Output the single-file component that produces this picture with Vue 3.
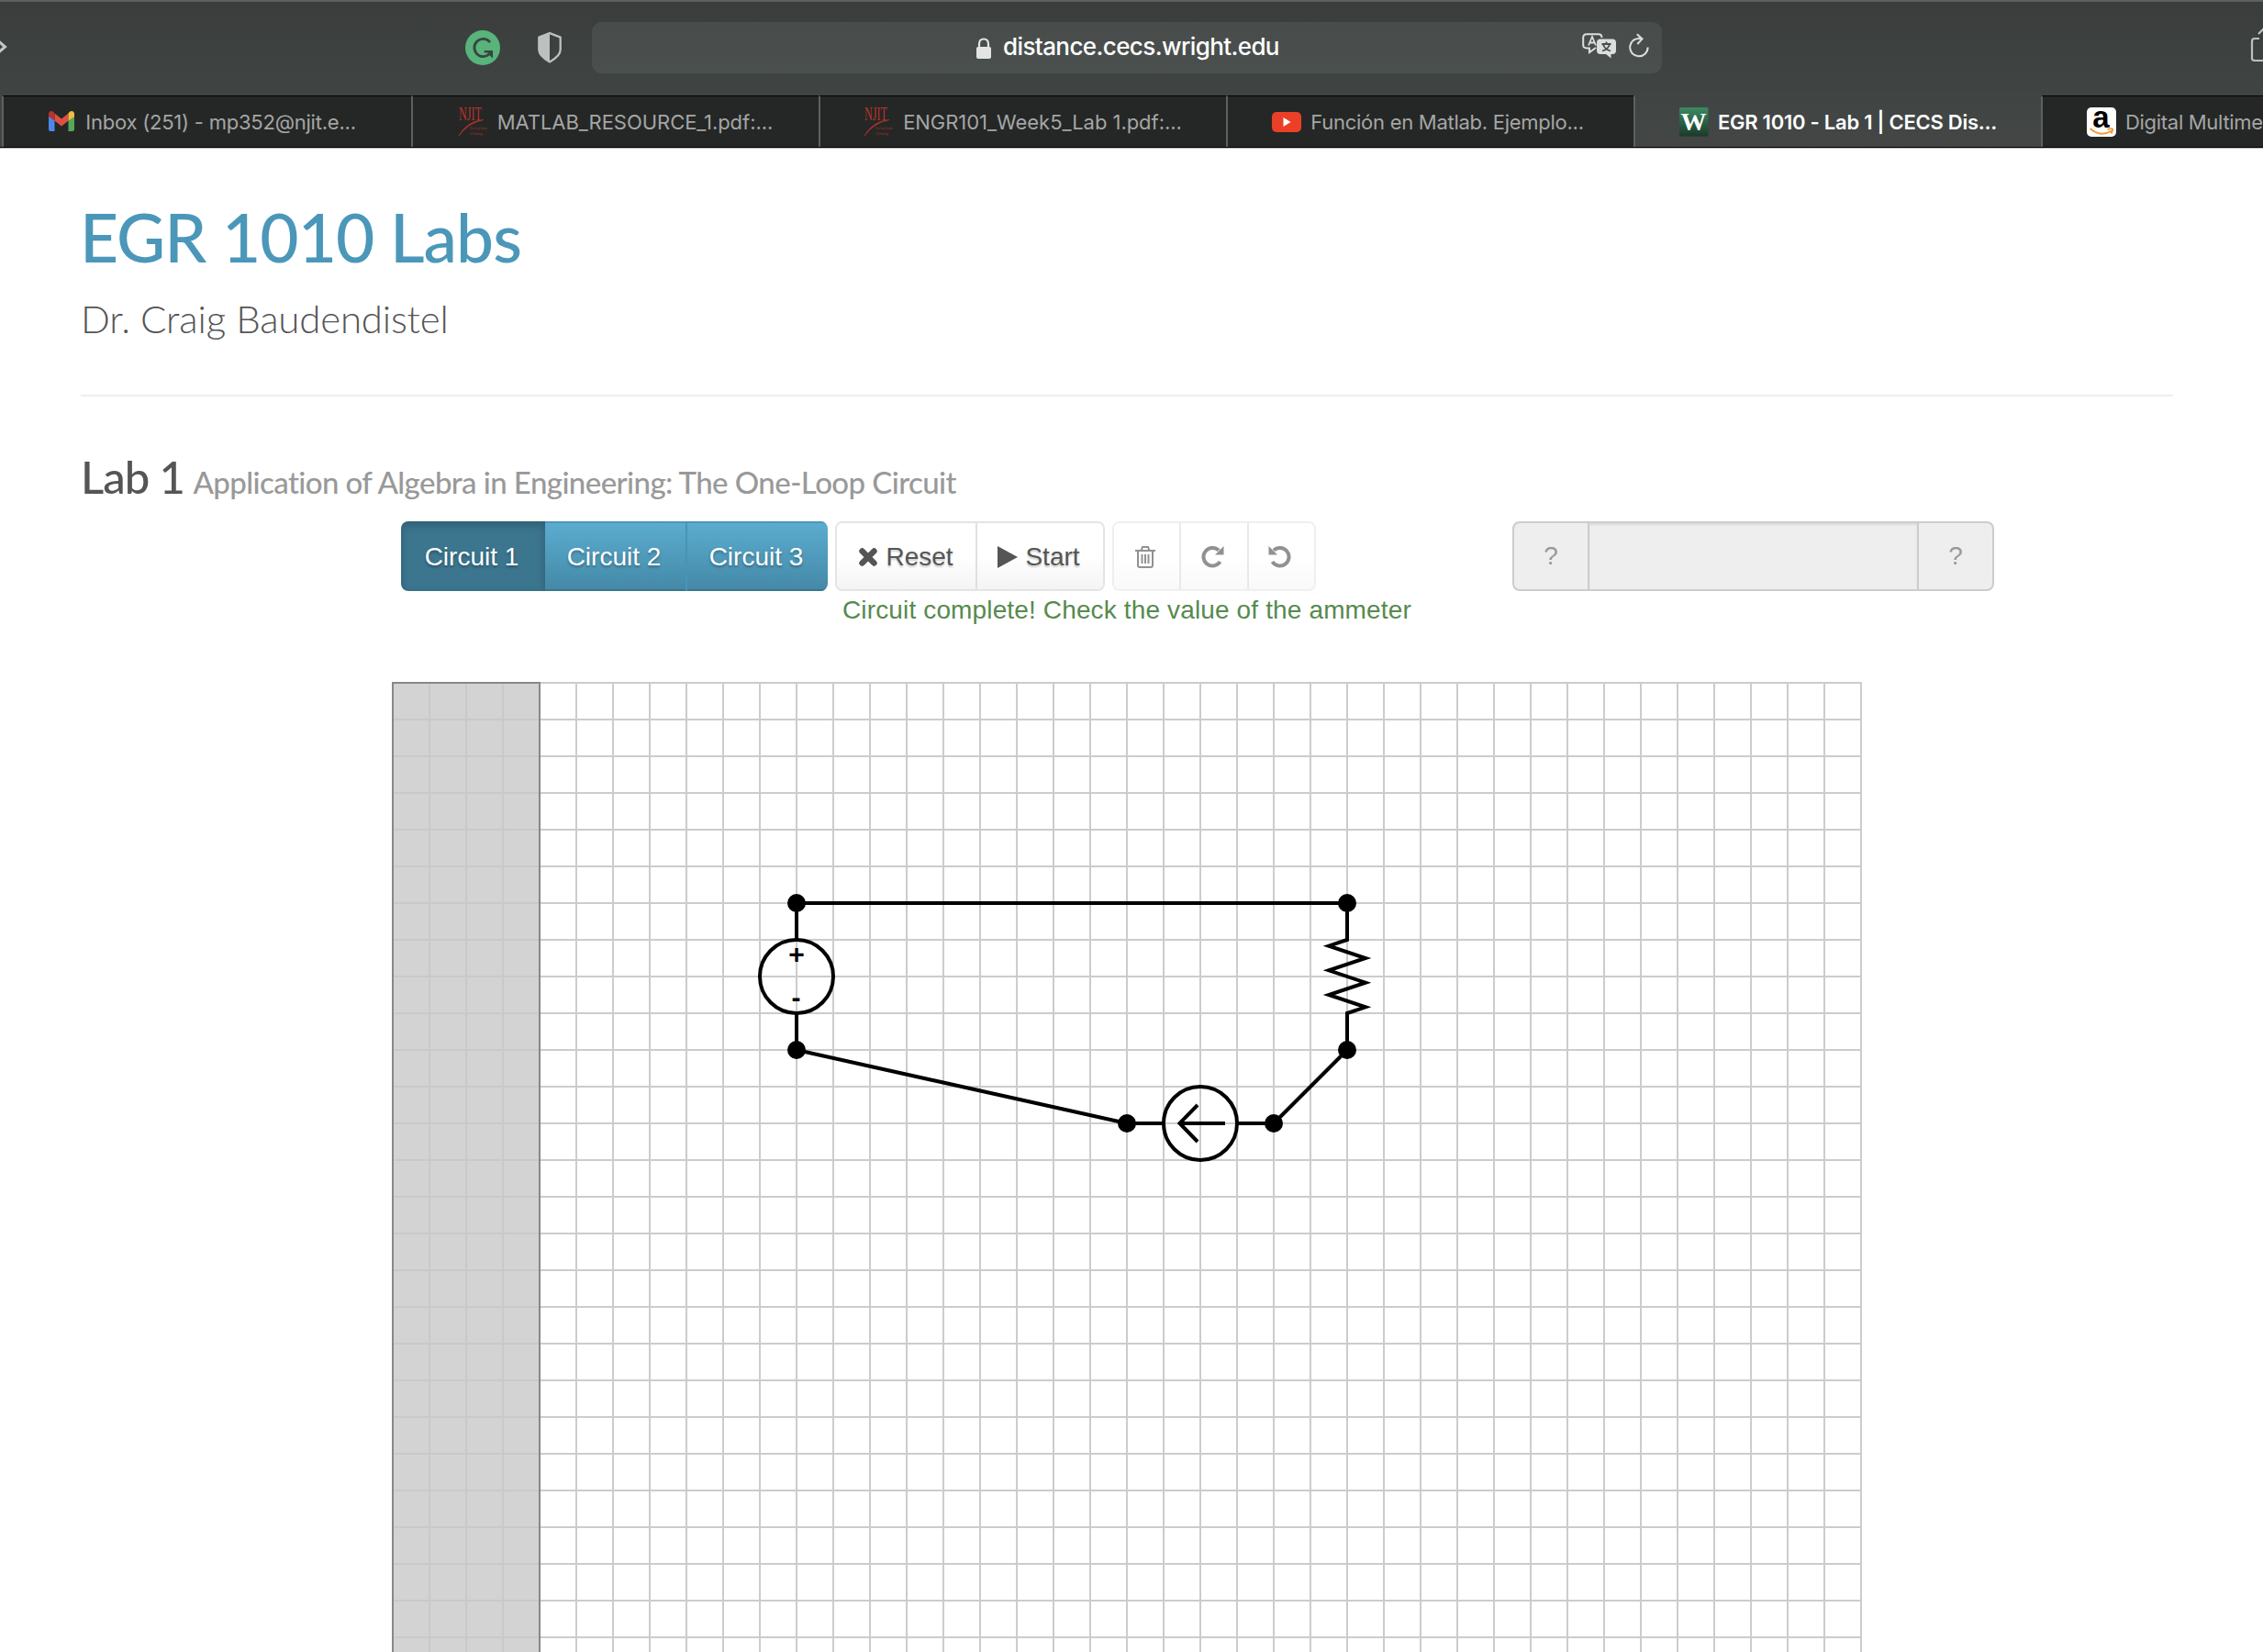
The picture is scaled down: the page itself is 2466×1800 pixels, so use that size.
<script setup>
import { computed } from 'vue'

const tabs = [
  { icon: 'gmail', title: 'Inbox (251) - mp352@njit.e...', ls: -0.22 },
  { icon: 'njit', title: 'MATLAB_RESOURCE_1.pdf:...', ls: -0.04 },
  { icon: 'njit', title: 'ENGR101_Week5_Lab 1.pdf:...', ls: -0.04 },
  { icon: 'youtube', title: 'Función en Matlab. Ejemplo...', ls: -0.27 },
  { icon: 'wright', title: 'EGR 1010 - Lab 1 | CECS Dis...', active: true, ls: -0.25 },
  { icon: 'amazon', title: 'Digital Multime', ls: -0.3 }
]
const CELL = 40
const gridPath = computed(() => {
  let d = ''
  for (let i = 0; i <= 40; i++) d += `M${2 + i * CELL} 1V1060`
  for (let j = 0; j <= 26; j++) d += `M1 ${2 + j * CELL}H1603`
  return d
})
const nodes = [[442, 242], [442, 402], [802, 482], [962, 482], [1042, 242], [1042, 402]]
</script>

<template>
  <div class="window">
    <header class="toolbar">
      <svg class="chevron" width="10" height="28" viewBox="0 0 10 28"><path d="M-6 4L5.500 14L-6 24" /></svg>
      <svg class="grammarly" width="38" height="38" viewBox="0 0 38 38">
        <circle cx="19" cy="19" r="19" fill="#58b47a" />
        <path d="M27 13A9.600 9.600 0 1 0 26 26" fill="none" stroke="#3a4441" stroke-width="2.800" />
        <path d="M20.700 22H30V30.500L27 27.800L24.500 24.500H20.700Z" fill="#3a4441" />
      </svg>
      <svg class="shield" width="28" height="34" viewBox="0 0 28 34">
        <path d="M14 1.2L25.7 5.6V19Q25.7 26 14 32.4Q2.300 26 2.300 19V5.600Z" fill="none" stroke="#bcc0bf" stroke-width="2.300" stroke-linejoin="round" />
        <path d="M14 1.200V32.400Q2.300 26 2.300 19V5.600Z" fill="#bcc0bf" />
      </svg>
      <div class="address">
        <svg class="lock" width="18" height="24" viewBox="0 0 18 24">
          <path d="M4 12V7Q4 1.500 9 1.500T14 7V12" fill="none" stroke="#e3e4e4" stroke-width="2.200" />
          <rect x="1" y="10" width="16" height="13" rx="2" fill="#e3e4e4" />
        </svg>
        <span class="host">distance.cecs.wright.edu</span>
        <svg class="translate" width="38" height="28" viewBox="0 0 38 28">
          <path d="M15 16L8 21V16.500H5Q1.200 16.500 1.200 13V5Q1.200 1.200 5 1.200H18Q21.500 1.200 21.500 5" fill="none" stroke="#dcdedd" stroke-width="2" />
          <path d="M7 13.500L11 4L15 13.500M8.500 10.500H13.500" fill="none" stroke="#dcdedd" stroke-width="1.800" />
          <path d="M20 6.500H33Q37 6.500 37 10.500V19Q37 23 33 23H31.500V27.500L26 23H20Q16 23 16 19V10.500Q16 6.500 20 6.500Z" fill="#dcdedd" />
          <path d="M21.500 12H31.500M26.500 9.500V12M23 12.500Q25 18 31 19.500M30 12.500Q28 18 22 19.500" fill="none" stroke="#484d4b" stroke-width="1.800" />
        </svg>
        <svg class="reload" width="24" height="28" viewBox="0 0 24 28">
          <path d="M14.500 6.300A9.700 9.700 0 1 0 21.600 15.500M9.800 1.200L15.500 6.400L10.300 12" fill="none" stroke="#dcdedd" stroke-width="2" />
        </svg>
      </div>
      <svg class="share" width="14" height="38" viewBox="0 0 14 38">
        <path d="M10 12H5Q2 12 2 15V33.500Q2 36 5 36H20M9 7L16 0" fill="none" stroke="#bcc0bf" stroke-width="2.200" />
      </svg>
    </header>

    <nav class="tabs">
      <div v-for="(tab, i) in tabs" :key="i" class="tab" :class="[tab.icon + '-tab', { active: tab.active }]">
        <svg v-if="tab.icon === 'gmail'" class="favicon" width="30" height="24" viewBox="0 0 30 24">
          <path d="M1 3V20Q1 22 3 22H7.500V10Z" fill="#4e86ec" />
          <path d="M29 3V20Q29 22 27 22H22.500V10Z" fill="#57a65a" />
          <path d="M7.500 2.500L15 8.500L22.500 2.500V10.500L15 16.500L7.500 10.500Z" fill="#dd5144" />
          <path d="M1 6V3.500Q1 0 4 0Q5.500 0 7.500 2.300V10.500Z" fill="#b5352c" />
          <path d="M29 6V3.500Q29 0 26 0Q24.500 0 22.500 2.300V10.500Z" fill="#f1bd42" />
        </svg>
        <svg v-else-if="tab.icon === 'njit'" class="favicon" width="32" height="32" viewBox="0 0 32 32">
          <text x="0" y="13.500" textLength="25" lengthAdjust="spacingAndGlyphs" class="njit-name">NJIT</text>
          <path d="M0 31Q9 15 27 13.500Q10 17 0 31" fill="#b5342a" stroke="#b5342a" stroke-width=".6" />
          <text x="12" y="24" textLength="19" lengthAdjust="spacingAndGlyphs" class="njit-small">New Jersey Institute</text>
          <text x="12" y="30" textLength="14" lengthAdjust="spacingAndGlyphs" class="njit-small">of Technology</text>
        </svg>
        <svg v-else-if="tab.icon === 'youtube'" class="favicon" width="32" height="24" viewBox="0 0 32 24">
          <rect y="1" width="32" height="22" rx="5" fill="#eb4027" /><path d="M12.500 7L20.500 12L12.500 17Z" fill="#fff" />
        </svg>
        <svg v-else-if="tab.icon === 'wright'" class="favicon" width="32" height="32" viewBox="0 0 32 32">
          <defs><linearGradient id="wg" x2="0" y2="1"><stop stop-color="#3c8a62" /><stop offset="1" stop-color="#1a3a29" /></linearGradient></defs>
          <rect width="31.500" height="31.500" rx="1.500" fill="url(#wg)" />
          <text x="15.500" y="24.500" text-anchor="middle" textLength="28" lengthAdjust="spacingAndGlyphs" class="w-mark">W</text>
        </svg>
        <svg v-else class="favicon" width="32" height="32" viewBox="0 0 32 32">
          <rect width="32" height="32" rx="5" fill="#fff" />
          <text x="15.500" y="22" text-anchor="middle" class="a-mark">a</text>
          <path d="M3.500 23Q15 33 27 25.500M22.500 24Q27 22.500 28 23.500Q28.500 25 26.500 28.500" fill="none" stroke="#f19e38" stroke-width="2" />
        </svg>
        <span :style="{ letterSpacing: tab.ls + 'px' }">{{ tab.title }}</span>
      </div>
    </nav>

    <main>
      <div class="page-header">
        <h1>EGR 1010 Labs</h1>
        <p class="lead">Dr. Craig Baudendistel</p>
      </div>
      <h3>Lab 1 <small>Application of Algebra in Engineering: The One-Loop Circuit</small></h3>

      <div class="controls">
        <div class="group primary">
          <button class="pressed">Circuit 1</button><button>Circuit 2</button><button>Circuit 3</button>
        </div>
        <div class="group actions">
          <button class="reset">
            <svg width="20" height="20" viewBox="0 0 20 20"><path d="M3.500 3.500L16.500 16.500M16.500 3.500L3.500 16.500" stroke="#555" stroke-width="6.400" stroke-linecap="round" /></svg>
            <span>Reset</span>
          </button>
          <button class="start">
            <svg width="22" height="24" viewBox="0 0 22 24"><path d="M0 0L22 12L0 24Z" fill="#555" /></svg>
            <span>Start</span>
          </button>
        </div>
        <div class="group tools">
          <button>
            <svg width="22" height="24" viewBox="0 0 22 24" fill="none" stroke="#919191" stroke-width="2"><path d="M0 5H22M6.500 5L8 1H14L15.500 5M3 5V21Q3 23 5 23H17Q19 23 19 21V5M7.500 9V19M11 9V19M14.500 9V19" /></svg>
          </button>
          <button>
            <svg width="25" height="25" viewBox="0 0 25 25"><path d="M20.500 18A9.800 9.800 0 1 1 19 5.600" fill="none" stroke="#919191" stroke-width="4" /><path d="M24.500 1V10.500H15Z" fill="#919191" /></svg>
          </button>
          <button>
            <svg class="mirror" width="25" height="25" viewBox="0 0 25 25"><path d="M20.500 18A9.800 9.800 0 1 1 19 5.600" fill="none" stroke="#919191" stroke-width="4" /><path d="M24.500 1V10.500H15Z" fill="#919191" /></svg>
          </button>
        </div>
        <div class="reading"><span>?</span><div class="value"></div><span>?</span></div>
      </div>
      <p class="status">Circuit complete! Check the value of the ammeter</p>

      <svg class="board" width="1604" height="1058" viewBox="0 0 1604 1058">
        <path :d="gridPath" stroke="#ccc" stroke-width="2" />
        <rect x="2" y="2" width="160" height="1100" fill="rgba(200,200,200,.8)" stroke="#888" stroke-width="2" />
        <g fill="none" stroke="#000" stroke-width="4">
          <path d="M442 242H1042M442 402L802 482M962 482L1042 402" />
          <path d="M442 242V282M442 362V402M802 482H842M922 482H962" />
          <circle cx="442" cy="322" r="40" /><circle cx="882" cy="482" r="40" />
          <path d="M1042 242V282L1022 288.700L1062 302L1022 315.300L1062 328.700L1022 342L1062 355.300L1042 362V402" />
          <path d="M879 462L859.500 481.900L879 502M861 482H909" />
        </g>
        <circle v-for="(n, i) in nodes" :key="i" :cx="n[0]" :cy="n[1]" r="10" />
        <text x="442" y="307.500" class="sign">+</text>
        <text x="441.500" y="354.500" class="sign">-</text>
      </svg>
    </main>
  </div>
</template>

<style>
body { margin: 0; background: #fff; }
</style>

<style scoped>
.window { width: 2466px; height: 1800px; overflow: hidden; background: #fff; font-family: "Liberation Sans", Arial, sans-serif; }
.window * { box-sizing: border-box; }
svg { display: block; flex: none; }
.toolbar { height: 104px; display: flex; align-items: flex-start; background: linear-gradient(#3a3d3b, #404543); border-top: 2px solid #5b6060; }
.chevron { margin-top: 35px; fill: none; stroke: #c4c7c6; stroke-width: 3; }
.grammarly { margin: 31px 0 0 497px; }
.shield { margin: 33px 0 0 40px; }
.address { display: flex; width: 1166px; height: 56px; margin: 22px 0 0 32px; border-radius: 11px; background: linear-gradient(#484c4a, #4a504e); }
.lock { margin: 17px 0 0 418px; }
.host { margin-left: 12px; width: 302px; white-space: nowrap; font: 500 26px/54px Inter, sans-serif; color: #fff; letter-spacing: -.6px; }
.translate { margin: 12px 0 0 329px; }
.reload { margin: 12px 0 0 12px; }
.share { margin: 28px 0 0 641px; }
.tabs { display: flex; height: 57px; padding-left: 2px; background: #404543; border-bottom: 1px solid #000; box-shadow: 0 1px #bbb; }
.tab { flex: 0 0 444px; height: 56px; display: flex; align-items: center; justify-content: center; gap: 10px; border-left: 2px solid #5c6160; border-top: 1px solid #000; background: #252726; font: 400 22px/54px Inter, sans-serif; color: #a4a6a5; white-space: nowrap; }
.tab:first-child { flex-basis: 446px; padding-right: 12px; gap: 11px; }
.youtube-tab { padding-right: 6px; }
.tab.active { background: linear-gradient(#404544, #434645); border-top-color: transparent; color: #fff; font-weight: 600; }
.tab:last-child { justify-content: flex-start; padding-left: 48px; }
.favicon { overflow: visible; }
.njit-name { font: 20px "Liberation Serif", serif; fill: #b5342a; }
.njit-small { font: 5px "Liberation Serif", serif; fill: #b5342a; }
.w-mark { font: bold 27px "Liberation Serif", serif; fill: #fff; }
.a-mark { font: bold 33px "Liberation Sans", sans-serif; fill: #000; }
main { width: 2280px; margin-left: 88px; }
.page-header { height: 271px; padding-top: 49px; border-bottom: 2px solid #eee; }
h1 { margin: 0 0 0 -1px; font: 500 73px/96px Lato, sans-serif; color: #4b97b9; letter-spacing: -.95px; }
.lead { margin: 11px 0 0; font: 300 42px/60px Lato, sans-serif; color: #555; letter-spacing: -.18px; }
h3 { margin: 47px 0 0; font: 500 49px/80px Lato, sans-serif; color: #555; white-space: nowrap; letter-spacing: -1px; }
small { margin-left: -2px; font-size: 33px; color: #999; letter-spacing: -.58px; }
.controls { display: flex; margin: 3px 0 0 349px; height: 76px; }
.group { display: flex; border-radius: 8px; overflow: hidden; border: 2px solid #e4e4e4; }
button { display: flex; align-items: center; justify-content: center; margin: 0; padding: 1px 3px 0 0; border: 0; border-left: 2px solid #e0e0e0; background: linear-gradient(#fff 50%, #f4f4f4); font: 28px/40px "Liberation Sans", Arial, sans-serif; color: #555; text-shadow: 0 2px 2px rgba(0, 0, 0, .2); }
button:first-child { border-left: 0; }
.primary { width: 465px; border: 0; }
.primary button { width: 155px; border-left-color: #4794b6; color: #fff; background: linear-gradient(#5badd0, #4488a6); box-shadow: inset 0 2px #4b97b9, inset 0 -2px #3c748c; text-shadow: 0 2px 3px rgba(0, 0, 0, .3); }
.primary button:nth-child(2) { width: 153px; border: 0; }
.primary button.pressed { width: 157px; background: #3b758e; box-shadow: inset 0 4px 10px rgba(0, 0, 0, .2); }
.actions { width: 294px; margin-left: 8px; }
.reset { width: 151px; gap: 9px; padding-right: 0; }
.start { flex: 1; gap: 8px; }
.tools { width: 222px; margin-left: 8px; border-color: #efefef; }
.tools button { flex: 1; border-left-color: #e9e9e9; background: linear-gradient(#fff 50%, #f9f9f9); }
.mirror { transform: scaleX(-1); }
.reading { display: flex; width: 525px; margin-left: 214px; border: 2px solid #ccc; border-radius: 8px; background: #eee; color: #999; font-size: 28px; line-height: 72px; text-align: center; }
.reading span { width: 80px; }
.value { flex: 1; border: solid #ccc; border-width: 0 2px; box-shadow: inset 0 2px 2px rgba(0, 0, 0, .075); }
.status { margin: 0 0 0 830px; font-size: 28px; line-height: 42px; height: 40px; color: #568a4e; white-space: nowrap; letter-spacing: .14px; }
.board { margin: 58px 0 0 338px; }
.sign { font: bold 30px "Liberation Sans", sans-serif; text-anchor: middle; }
</style>
